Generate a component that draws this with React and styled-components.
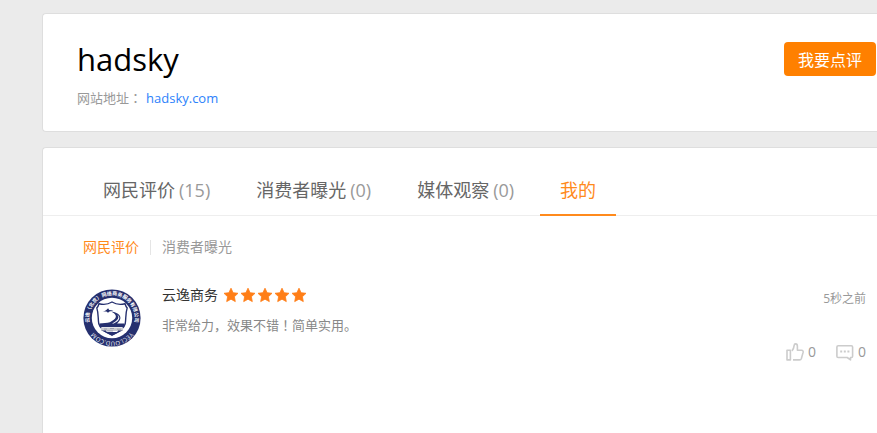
import React from 'react';
import styled, { createGlobalStyle } from 'styled-components';

const GlobalStyle = createGlobalStyle`
  * {
    box-sizing: border-box;
  }

  body {
    margin: 0;
    background: #ebebeb;
    color: #333;
    font-family: 'Open Sans', 'Noto Sans CJK SC', sans-serif;
    font-size: 14px;
  }

  h1, p {
    margin: 0;
  }

  a {
    color: inherit;
    text-decoration: none;
  }
`;

const Page = styled.div`
  display: flex;
  flex-direction: column;
  gap: 15px;
  min-height: 100vh;
  padding: 13px 0 0 42px;
`;

const Panel = styled.section`
  background: white;
  border: 1px solid #dedede;
  border-right: none;
  border-radius: 4px 0 0 4px;
`;

const SiteHeader = styled(Panel)`
  display: flex;
  justify-content: space-between;
  align-items: flex-start;
  padding: 28px 1px 23px 34px;
`;

const SiteName = styled.h1`
  color: #000;
  font-size: 31px;
  font-weight: 400;
  line-height: 34px;
`;

const SiteAddress = styled.p`
  display: flex;
  gap: 4px;
  margin-top: 12px;
  color: #999;
  font-size: 13px;
  line-height: 20px;
`;

const SiteLink = styled.a`
  color: #2d82fb;
`;

/* centred full-width punctuation */
const Mark = styled.span`
  font-family: 'Noto Sans CJK JP', sans-serif;
`;

const ReviewButton = styled.button`
  height: 34px;
  padding: 0 14px;
  border: none;
  border-radius: 4px;
  background: #ff8000;
  color: white;
  font-family: inherit;
  font-size: 16px;
  cursor: pointer;
`;

const Content = styled(Panel)`
  flex: 1;
  border-bottom: none;
  border-radius: 4px 0 0 0;
`;

const Tabs = styled.nav`
  display: flex;
  gap: 6px;
  padding: 18px 0 0 40px;
  border-bottom: 1px solid #eee;
`;

const Tab = styled.a`
  display: flex;
  gap: 4px;
  margin-bottom: -1px;
  padding: 0 20px;
  border-bottom: 2px solid ${({ $active }) => ($active ? '#ff8a1c' : 'transparent')};
  color: ${({ $active }) => ($active ? '#ff8a1c' : '#666')};
  font-size: 18px;
  line-height: 48px;
`;

const Count = styled.span`
  color: #999;
`;

const SubTabs = styled.nav`
  display: flex;
  align-items: center;
  padding: 21px 0 0 40px;
  line-height: 20px;
`;

const SubTab = styled.a`
  display: flex;
  align-items: center;
  color: ${({ $active }) => ($active ? '#ff8a1c' : '#999')};

  &:not(:first-child)::before {
    content: '';
    height: 15px;
    margin: 0 11px;
    border-left: 1px solid #e5e5e5;
  }
`;

const Review = styled.article`
  display: flex;
  align-items: flex-start;
  gap: 21px;
  padding: 26px 11px 0 40px;
`;

const Portrait = styled.div`
  display: flex;
  padding-top: 6px;
`;

const ReviewBody = styled.div`
  flex: 1;
  min-width: 0;
`;

const ReviewHead = styled.div`
  display: flex;
  align-items: center;
  gap: 5px;
  height: 24px;
  line-height: 20px;
`;

const Stars = styled.span`
  display: flex;
  gap: 1px;
`;

const Time = styled.time`
  align-self: flex-end;
  margin-left: auto;
  color: #999;
  font-size: 12px;
  line-height: 16px;
`;

const ReviewText = styled.p`
  margin-top: 8px;
  color: #888;
  font-size: 13px;
  line-height: 20px;
`;

const Actions = styled.div`
  display: flex;
  justify-content: flex-end;
  gap: 20px;
  margin-top: 7px;
`;

const Action = styled.button`
  display: flex;
  align-items: center;
  gap: 4px;
  padding: 0;
  border: none;
  background: none;
  color: #999;
  font-family: inherit;
  font-size: 14px;
  line-height: 20px;
  cursor: pointer;
`;

const TABS = [
  { label: '网民评价', count: 15 },
  { label: '消费者曝光', count: 0 },
  { label: '媒体观察', count: 0 },
  { label: '我的', active: true },
];

const Star = () => (
  <svg width="16" height="16" viewBox="0 0 16 16" aria-hidden="true">
    <path
      d="M8 1.2l2.1 4.5 4.9.6-3.6 3.4.9 4.9L8 12.2l-4.3 2.4.9-4.9L1 6.3l4.9-.6z"
      fill="#ff7e17"
      stroke="#ff7e17"
      strokeWidth="0.8"
      strokeLinejoin="round"
    />
  </svg>
);

const LikeIcon = () => (
  <svg width="18" height="18" viewBox="0 0 18 18" fill="none" stroke="#ccc" strokeWidth="1.6" strokeLinejoin="round" aria-hidden="true">
    <path d="M1 7.3h3.4v9.6H1z" />
    <path d="M7 16.9h6.6c1 0 1.5-.5 1.8-1.4l1.7-6.1c.3-1.2-.3-2.1-1.5-2.1h-4.2V3.2c0-1.5-.7-2.3-1.8-2.3-1 0-1.4.6-1.5 1.7C7.900 5 7.300 6.400 5.900 7.900" />
  </svg>
);

const CommentIcon = () => (
  <svg width="18" height="18" viewBox="0 0 18 18" fill="none" stroke="#ccc" strokeWidth="1.6" strokeLinejoin="round" aria-hidden="true">
    <path d="M2.2 2.7h13.1c.8 0 1.3.5 1.3 1.3v9.2c0 .8-.5 1.3-1.300 1.300h-.8v2.400l-3.300-2.400H2.200c-.8 0-1.300-.5-1.300-1.300V4c0-.8.5-1.300 1.300-1.300z" />
    <path d="M4.200 8.500h2M7.800 8.500h2M11.400 8.500h2" strokeWidth="1.8" />
  </svg>
);

const Avatar = () => (
  <svg width="58" height="58" viewBox="0 0 58 58" role="img" aria-label="云逸商务">
    <defs>
      <path id="ring-top" d="M9.6 41A22.8 22.8 0 1 1 48.400 41" />
      <path id="ring-bottom" d="M52.300 43.500A27 27 0 0 1 5.700 43.500" transform="translate(4.500 4.500) scale(0.845)" />
    </defs>
    <circle cx="29" cy="29" r="28.6" fill="#26306f" />
    <circle cx="29" cy="29" r="20.2" fill="#fff" />
    <g fill="#fff">
      <text fontSize="5" fontWeight="700">
        <textPath href="#ring-top" startOffset="50%" textAnchor="middle">
          云逸（北京）网络商务服务有限公司
        </textPath>
      </text>
      <text fontSize="6">
        <textPath href="#ring-bottom" startOffset="50%" textAnchor="middle">
          YECLOUD.COM
        </textPath>
      </text>
    </g>
    <path
      d="M29 13c-3.600 2.200-8 3-13 1.700-.6 2-1.200 3.200-2.200 4.200 2 6.200 1 11 2 16C17.200 40.500 23 43.500 29 46.200c6-2.700 11.800-5.700 13.200-11.300 1-5 0-9.800 2-16-1-1-1.600-2.200-2.200-4.200-5 1.300-9.400.5-13-1.700z"
      fill="#fff"
      stroke="#26306f"
      strokeWidth="1.4"
    />
    <path d="M16.200 34.500c4-.3 8-.6 10.600-1.300 3-1.500 5.600-3 6-5.200.5-2.600-2.200-4.300-5.200-5.800 6 1 10.200 3.400 9.800 7-.3 2-1.600 3.700-3.300 5.300h7.700l-.8 3.500H17z" fill="#26306f" />
    <path d="M34 25.500c2.600 2.600 1.800 5.600-5 9h1.800c6.200-3 7-6.500 3.200-9z" fill="#fff" />
    <path d="M19.500 22.500c2.400-.2 4-1.600 5.600-3.300l1.100 1.700 4.300.6-4 .9-1.500 1.300-1.600-1.200z" fill="#26306f" />
    <path d="M18 38.500h22v3.500H18z" fill="#c9cad0" />
    <path d="M21 40h3M27 39.500h4M34 40.200h4M24 42h6" stroke="#9296a8" strokeWidth="0.8" />
    <path d="M18.500 41.500h4.500v1.500h12v-1.500h4.500L29 46.600z" fill="#26306f" />
  </svg>
);

const App = () => {
  return (
    <>
      <GlobalStyle />
      <Page>
        <SiteHeader as="header">
          <div>
            <SiteName>hadsky</SiteName>
            <SiteAddress>
              <span>
                网站地址<Mark>：</Mark>
              </span>
              <SiteLink href="#site">hadsky.com</SiteLink>
            </SiteAddress>
          </div>
          <ReviewButton type="button">我要点评</ReviewButton>
        </SiteHeader>
        <Content as="main">
          <Tabs>
            {TABS.map(({ label, count, active }) => (
              <Tab key={label} href="#tab" $active={active}>
                {label}
                {count !== undefined && <Count>({count})</Count>}
              </Tab>
            ))}
          </Tabs>
          <SubTabs>
            <SubTab href="#reviews" $active>
              网民评价
            </SubTab>
            <SubTab href="#exposure">消费者曝光</SubTab>
          </SubTabs>
          <Review>
            <Portrait>
              <Avatar />
            </Portrait>
            <ReviewBody>
              <ReviewHead>
                <span>云逸商务</span>
                <Stars role="img" aria-label="5">
                  {[1, 2, 3, 4, 5].map((n) => (
                    <Star key={n} />
                  ))}
                </Stars>
                <Time>5秒之前</Time>
              </ReviewHead>
              <ReviewText>
                非常给力，效果不错<Mark>！</Mark>简单实用。
              </ReviewText>
              <Actions>
                <Action type="button">
                  <LikeIcon />0
                </Action>
                <Action type="button">
                  <CommentIcon />0
                </Action>
              </Actions>
            </ReviewBody>
          </Review>
        </Content>
      </Page>
    </>
  );
};

export default App;
